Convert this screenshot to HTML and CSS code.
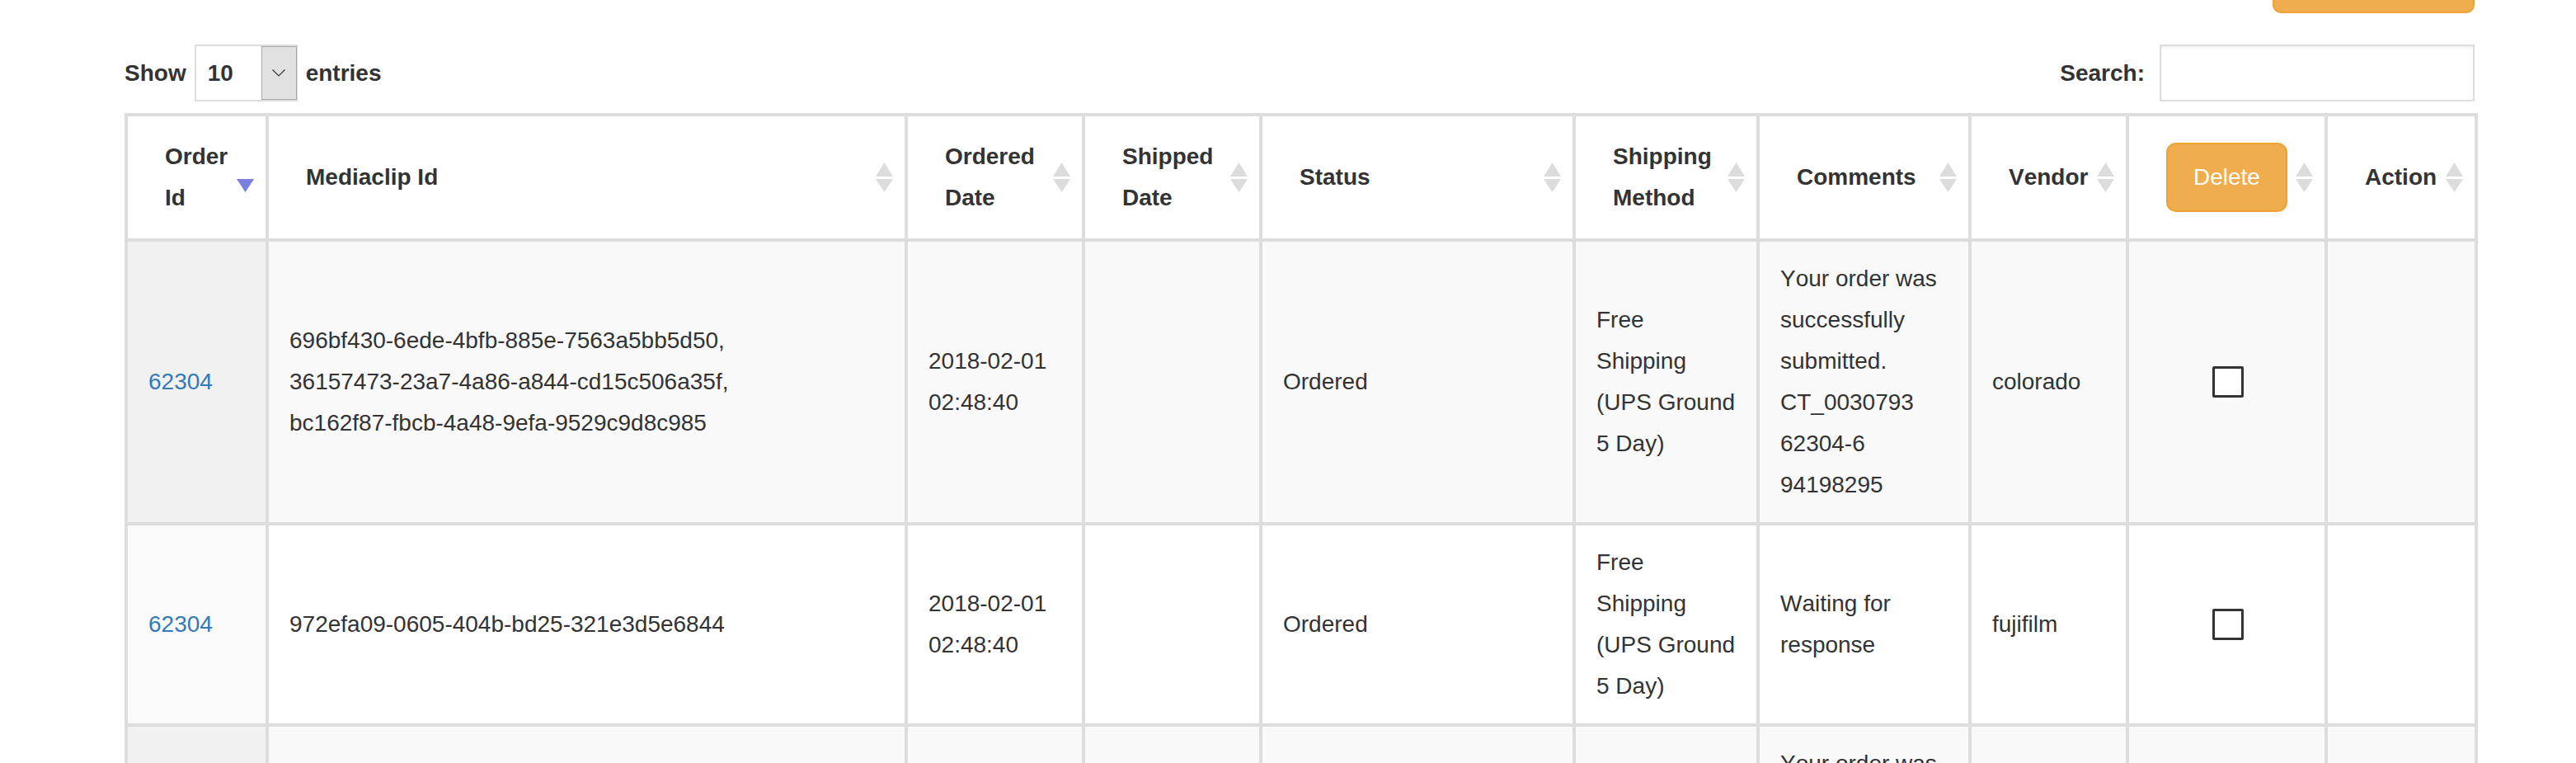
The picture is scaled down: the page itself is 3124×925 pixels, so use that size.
FILE: index.html
```html
<!DOCTYPE html>
<html lang="en">
<head>
<meta charset="utf-8">
<title>Orders</title>
<link rel="stylesheet" href="styles.css">
</head>
<body>
<div class="page">
  <div class="toolbar">
    <button class="btn-top" type="button" aria-label="Action"></button>
  </div>

  <div class="controls">
    <div class="length">
      <span>Show</span>
      <div class="select">
        <span class="select-value">10</span>
        <span class="select-arrow">
          <svg width="16" height="9" viewBox="0 0 16 9"><path d="M0.5 0.5L8 8L15.5 0.5" fill="none" stroke="#333" stroke-width="1.2"/></svg>
        </span>
      </div>
      <span>entries</span>
    </div>
    <label class="search">
      <span>Search:</span>
      <input class="search-input" type="search">
    </label>
  </div>

  <table class="grid">
    <thead>
      <tr>
        <th class="w1"><div class="th-inner"><span>Order Id</span><svg class="sort" viewBox="0 0 21 37" width="21" height="37"><path class="sorted" d="M0 20h21L10.5 36z"/></svg></div></th>
        <th class="w2"><div class="th-inner"><span>Mediaclip Id</span><svg class="sort" viewBox="0 0 21 37" width="21" height="37"><path d="M10.5 0L21 17H0z"/><path d="M0 20h21L10.5 36z"/></svg></div></th>
        <th class="w3"><div class="th-inner"><span>Ordered Date</span><svg class="sort" viewBox="0 0 21 37" width="21" height="37"><path d="M10.5 0L21 17H0z"/><path d="M0 20h21L10.5 36z"/></svg></div></th>
        <th class="w4"><div class="th-inner"><span>Shipped Date</span><svg class="sort" viewBox="0 0 21 37" width="21" height="37"><path d="M10.5 0L21 17H0z"/><path d="M0 20h21L10.5 36z"/></svg></div></th>
        <th class="w5"><div class="th-inner"><span>Status</span><svg class="sort" viewBox="0 0 21 37" width="21" height="37"><path d="M10.5 0L21 17H0z"/><path d="M0 20h21L10.5 36z"/></svg></div></th>
        <th class="w6"><div class="th-inner"><span>Shipping Method</span><svg class="sort" viewBox="0 0 21 37" width="21" height="37"><path d="M10.5 0L21 17H0z"/><path d="M0 20h21L10.5 36z"/></svg></div></th>
        <th class="w7"><div class="th-inner"><span>Comments</span><svg class="sort" viewBox="0 0 21 37" width="21" height="37"><path d="M10.5 0L21 17H0z"/><path d="M0 20h21L10.5 36z"/></svg></div></th>
        <th class="w8"><div class="th-inner"><span>Vendor</span><svg class="sort" viewBox="0 0 21 37" width="21" height="37"><path d="M10.5 0L21 17H0z"/><path d="M0 20h21L10.5 36z"/></svg></div></th>
        <th class="w9"><div class="th-inner"><button class="btn-delete" type="button">Delete</button><svg class="sort" viewBox="0 0 21 37" width="21" height="37"><path d="M10.5 0L21 17H0z"/><path d="M0 20h21L10.5 36z"/></svg></div></th>
        <th class="w10"><div class="th-inner"><span>Action</span><svg class="sort" viewBox="0 0 21 37" width="21" height="37"><path d="M10.5 0L21 17H0z"/><path d="M0 20h21L10.5 36z"/></svg></div></th>
      </tr>
    </thead>
    <tbody>
      <tr class="odd">
        <td class="sorting_1"><a href="#">62304</a></td>
        <td>696bf430-6ede-4bfb-885e-7563a5bb5d50,<br>36157473-23a7-4a86-a844-cd15c506a35f,<br>bc162f87-fbcb-4a48-9efa-9529c9d8c985</td>
        <td>2018-02-01 02:48:40</td>
        <td></td>
        <td>Ordered</td>
        <td>Free Shipping (UPS Ground 5 Day)</td>
        <td>Your order was successfully submitted. CT_0030793 62304-6 94198295</td>
        <td>colorado</td>
        <td class="cb-cell"><input class="cb" type="checkbox"></td>
        <td></td>
      </tr>
      <tr class="even">
        <td class="sorting_1"><a href="#">62304</a></td>
        <td>972efa09-0605-404b-bd25-321e3d5e6844</td>
        <td>2018-02-01 02:48:40</td>
        <td></td>
        <td>Ordered</td>
        <td>Free Shipping (UPS Ground 5 Day)</td>
        <td>Waiting for response</td>
        <td>fujifilm</td>
        <td class="cb-cell"><input class="cb" type="checkbox"></td>
        <td></td>
      </tr>
      <tr class="odd">
        <td class="sorting_1"><a href="#">62304</a></td>
        <td>696bf430-6ede-4bfb-885e-7563a5bb5d50</td>
        <td>2018-02-01 02:48:40</td>
        <td></td>
        <td>Ordered</td>
        <td>Free Shipping (UPS Ground 5 Day)</td>
        <td>Your order was successfully submitted. CT_0030793 62304-6 94198295</td>
        <td>colorado</td>
        <td class="cb-cell"><input class="cb" type="checkbox"></td>
        <td></td>
      </tr>
    </tbody>
  </table>
</div>
</body>
</html>
```

FILE: styles.css
```css
* {
  box-sizing: border-box;
}

body {
  margin: 0;
  background: #fff;
  color: #333;
  font-family: "Liberation Sans", Arial, sans-serif;
  font-size: 28px;
  line-height: 50px;
  font-kerning: none;
}

.page {
  width: 2850px;
  margin-left: 151px;
}

/* top toolbar with the partially visible button */
.toolbar {
  display: flex;
  justify-content: flex-end;
  height: 16px;
}

.btn-top {
  width: 245px;
  height: 60px;
  margin-top: -44px;
  background: #f0ad4e;
  border: 2px solid #eea236;
  border-radius: 10px;
}

/* length + search controls */
.controls {
  display: flex;
  justify-content: space-between;
  align-items: center;
  height: 69px;
  margin-top: 38px;
}

.length,
.search {
  display: flex;
  align-items: center;
  gap: 10px;
  font-weight: bold;
}

.search {
  gap: 18px;
}

.select {
  display: flex;
  width: 125px;
  height: 69px;
  border: 2px solid #ddd;
  background: #fff;
}

.select-value {
  flex: 1;
  padding-left: 14px;
  line-height: 65px;
  font-weight: bold;
}

.select-arrow {
  display: flex;
  align-items: center;
  justify-content: center;
  width: 43px;
  margin: 0 -1px 0 0;
  background: #e1e1e1;
  border: 1px solid #a9a9a9;
}

.search-input {
  width: 382px;
  height: 69px;
  margin: 0;
  padding: 0 12px;
  border: 2px solid #ddd;
  background: #fff;
  box-shadow: inset 0 2px 3px rgba(0, 0, 0, 0.06);
  font: inherit;
  font-weight: normal;
  outline: none;
}

/* table */
.grid {
  width: 2854px;
  margin-top: 14px;
  table-layout: fixed;
  border-collapse: separate;
  border-spacing: 0;
  border-left: 4px solid #ddd;
  border-top: 4px solid #ddd;
}

.grid th,
.grid td {
  border-right: 4px solid #ddd;
  border-bottom: 4px solid #ddd;
  vertical-align: middle;
  text-align: left;
}

.grid th {
  padding: 24px 14px 24px 45px;
  font-weight: bold;
  background: #fff;
}

.grid td {
  padding: 20px 22px 20px 25px;
  background: #fff;
}

.w1 { width: 171px; }
.w2 { width: 775px; }
.w3 { width: 215px; }
.w4 { width: 215px; }
.w5 { width: 380px; }
.w6 { width: 223px; }
.w7 { width: 257px; }
.w8 { width: 191px; }
.w9 { width: 241px; }
.w10 { width: 182px; }

.th-inner {
  display: flex;
  align-items: center;
  justify-content: space-between;
  gap: 6px;
}

.sort {
  flex-shrink: 0;
  fill: #dcdcdc;
}

.sort .sorted {
  fill: #7b7fdd;
}

.btn-delete {
  height: 84px;
  padding: 0 31px;
  background: #f0ad4e;
  border: 2px solid #eea236;
  border-radius: 12px;
  color: #fff;
  font: inherit;
  font-weight: normal;
  line-height: 50px;
}

.grid tr.odd td {
  background: #f9f9f9;
}

.grid tr.odd td.sorting_1 {
  background: #f1f1f1;
}

.grid tr.even td.sorting_1 {
  background: #fafafa;
}

.grid a {
  color: #337ab7;
  text-decoration: none;
}

.cb-cell {
  text-align: center;
}

.cb {
  -webkit-appearance: none;
  appearance: none;
  display: block;
  width: 38px;
  height: 38px;
  margin: 0 auto;
  border: 3px solid #333;
  border-radius: 2px;
  background: #fff;
}
```
